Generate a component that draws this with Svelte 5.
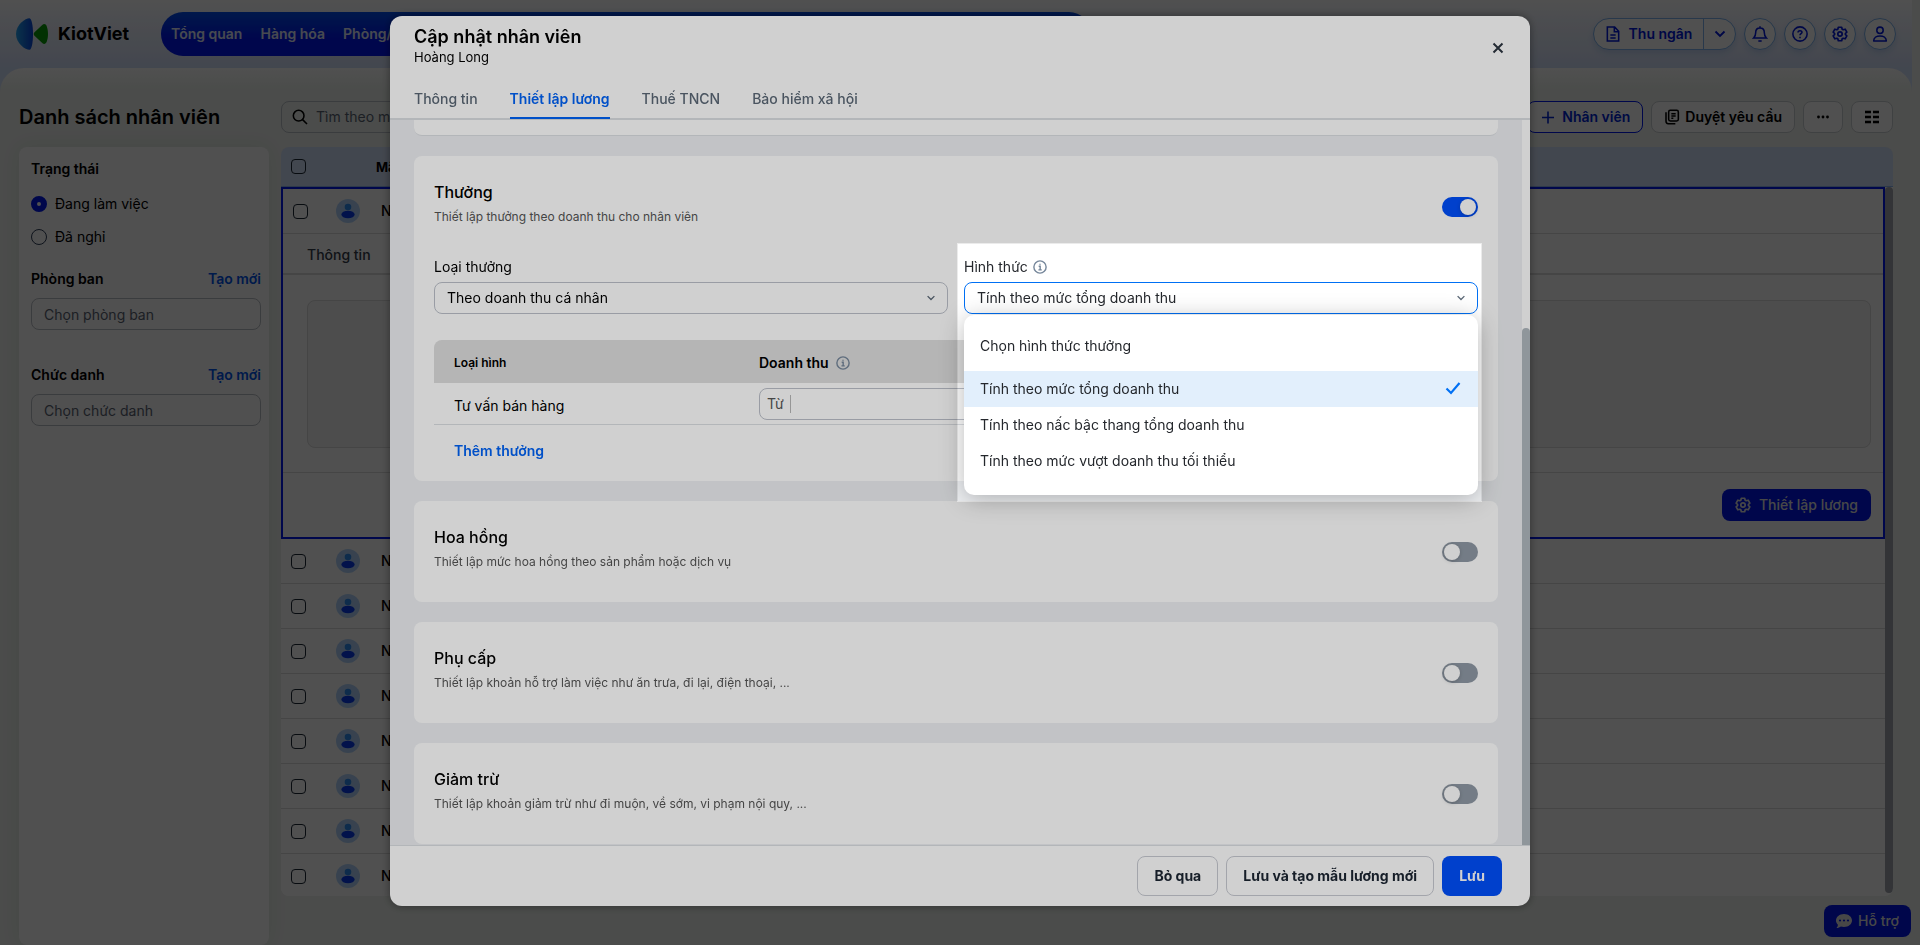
<script lang="ts">
	import { onMount } from 'svelte'

	const navItems = ['Tổng quan', 'Hàng hóa', 'Phòng/']
	const modalTabs = ['Thông tin', 'Thiết lập lương', 'Thuế TNCN', 'Bảo hiểm xã hội']
	const employees = ['NV8', 'NV7', 'NV6', 'NV5', 'NV4', 'NV3', 'NV2', 'NV1']
	const methods = [
		'Chọn hình thức thưởng',
		'Tính theo mức tổng doanh thu',
		'Tính theo nấc bậc thang tổng doanh thu',
		'Tính theo mức vượt doanh thu tối thiểu'
	]

	let status = $state('active')
	let activeTab = $state('Thiết lập lương')
	let method = $state(methods[1])
	let bonusOn = $state(true)
	let extras = $state([
		{ id: 'hoa-hong', title: 'Hoa hồng', desc: 'Thiết lập mức hoa hồng theo sản phẩm hoặc dịch vụ', on: false },
		{ id: 'phu-cap', title: 'Phụ cấp', desc: 'Thiết lập khoản hỗ trợ làm việc như ăn trưa, đi lại, điện thoại, ...', on: false },
		{ id: 'giam-tru', title: 'Giảm trừ', desc: 'Thiết lập khoản giảm trừ như đi muộn, về sớm, vi phạm nội quy, ...', on: false }
	])

	onMount(() => {
		document.documentElement.lang = 'vi'
	})
</script>

{#snippet gear()}
	<svg class="icon" viewBox="1 1.500 22 22" aria-hidden="true">
		<path stroke-linejoin="round" d="M9.700 3.200h4.600l.7 2.700 1.400.8 2.700-.8 2.300 4-2 1.900v1.400l2 1.900-2.300 4-2.700-.8-1.400.8-.7 2.700H9.700l-.7-2.700-1.400-.8-2.700.8-2.300-4 2-1.900v-1.400l-2-1.900 2.300-4 2.700.8 1.400-.8z" />
		<circle cx="12" cy="12.500" r="3" />
	</svg>
{/snippet}

{#snippet chevron()}
	<svg class="icon chevron" viewBox="0 0 16 16" aria-hidden="true"><path d="M3.500 5.500 8 10l4.500-4.500" /></svg>
{/snippet}

{#snippet info()}
	<svg class="info" viewBox="0 0 16 16" aria-hidden="true">
		<circle cx="8" cy="8" r="7" />
		<path d="M6.500 7.200H8.200V11.300M6.200 11.300H10" />
		<path d="M8 4.200v1.300" />
	</svg>
{/snippet}

{#snippet avatar()}
	<svg class="avatar" viewBox="0 0 24 24" aria-hidden="true">
		<circle cx="12" cy="12" r="12" fill="#b4d6fb" />
		<circle cx="12" cy="8" r="3.300" fill="#2f8df5" />
		<ellipse cx="12" cy="15.500" rx="6.600" ry="3.800" fill="#0a3cf0" />
	</svg>
{/snippet}

<div class="page">
	<header class="topbar">
		<a class="logo" href="#home">
			<svg viewBox="0 0 32 32" aria-hidden="true">
				<defs>
					<linearGradient id="logo-blue"><stop offset="0" stop-color="#24a4f0" /><stop offset="1" stop-color="#0b46dc" /></linearGradient>
				</defs>
				<path fill="url(#logo-blue)" d="M13.500 0.200C15.500 0.500 17 7 17 16S15.500 31.500 13.500 31.800C10 32 0 26 0 16S10 0 13.500 0.200Z" />
				<path fill="#0aa00a" d="M18.500 14.300 26.500 6.800C28 5.500 30 6 30.800 8.500 32.400 13 32.400 19 30.800 23.500 30 26 28 26.500 26.500 25.200L18.500 17.700C17.500 16.700 17.500 15.300 18.500 14.300Z" />
			</svg>
			<span>KiotViet</span>
		</a>
		<nav class="main-nav">
			{#each navItems as item}
				<a href="#nav">{item}</a>
			{/each}
		</nav>
		<div class="top-actions">
			<div class="cashier">
				<button>
					<svg class="icon" viewBox="0 0 24 24" aria-hidden="true"><path d="M3.500 1.500h11L20.500 8v14.500h-17zM14 2v6.500h6M8 13.500h8M8 18h8" /></svg>
					Thu ngân
				</button>
				<button aria-label="Mở rộng">{@render chevron()}</button>
			</div>
			<button class="round" aria-label="Thông báo">
				<svg class="icon" viewBox="0 0 24 24" aria-hidden="true"><path d="M2.500 18h19c-2-2-3-4-3-8 0-4-2.500-7-6.500-7s-6.500 3-6.500 7c0 4-1 6-3 8zM12 .5V3" /><path d="M9.500 22.500h5" /></svg>
			</button>
			<button class="round" aria-label="Trợ giúp">
				<svg class="icon" viewBox="0 0 24 24" aria-hidden="true"><circle cx="12" cy="12" r="10.700" /><path d="M9 9.800c0-3.700 6-3.700 6-.3 0 2-3 2.200-3 4.500M12 16v2.300" /></svg>
			</button>
			<button class="round" aria-label="Thiết lập">{@render gear()}</button>
			<button class="round" aria-label="Tài khoản">
				<svg class="icon" viewBox="0 0 24 24" aria-hidden="true"><circle cx="12" cy="6.500" r="4.800" /><path stroke-linejoin="round" d="M2.500 22.500c0-10 19-10 19 0z" /></svg>
			</button>
		</div>
	</header>

	<main class="content">
		<aside class="sidebar">
			<h1>Danh sách nhân viên</h1>
			<div class="filters">
				<h2>Trạng thái</h2>
				<label class="radio"><input type="radio" name="status" value="active" bind:group={status} />Đang làm việc</label>
				<label class="radio"><input type="radio" name="status" value="off" bind:group={status} />Đã nghỉ</label>
				<div class="filter">
					<div class="filter-head"><label for="department">Phòng ban</label><a href="#new-department">Tạo mới</a></div>
					<input id="department" type="text" placeholder="Chọn phòng ban" />
				</div>
				<div class="filter">
					<div class="filter-head"><label for="position">Chức danh</label><a href="#new-position">Tạo mới</a></div>
					<input id="position" type="text" placeholder="Chọn chức danh" />
				</div>
			</div>
		</aside>

		<section class="listing">
			<div class="toolbar">
				<label class="search">
					<svg class="icon" viewBox="0 0 24 24" aria-hidden="true"><circle cx="10" cy="10" r="8" /><path d="m15.500 15.500 7 7" /></svg>
					<input type="text" placeholder="Tìm theo mã" aria-label="Tìm nhân viên" />
				</label>
				<div class="toolbar-actions">
					<button class="tool primary">
						<svg class="icon thin" viewBox="0 0 16 16" aria-hidden="true"><path d="M8 2.500v12M2 8.500h12" /></svg>
						Nhân viên
					</button>
					<button class="tool">
						<svg class="icon" viewBox="0 0 24 24" aria-hidden="true"><rect x="7" y="2" width="14.500" height="16" rx="2.500" /><path d="M3 5v13.500q0 3.500 3.500 3.500H17M11 7h6.500M11 10.500h6.500M11 14h3" /></svg>
						Duyệt yêu cầu
					</button>
					<button class="tool more" aria-label="Thêm thao tác">
						<svg class="icon filled" viewBox="0 0 16 16" aria-hidden="true"><circle cx="3.500" cy="8" r="1.400" /><circle cx="8" cy="8" r="1.400" /><circle cx="12.500" cy="8" r="1.400" /></svg>
					</button>
					<button class="tool" aria-label="Tùy chỉnh cột">
						<svg class="icon" viewBox="0 0 16 16" aria-hidden="true"><path d="M1 3h6M9 3h6M1 8h6M9 8h6M1 13h6M9 13h6" /></svg>
					</button>
				</div>
			</div>

			<div class="grid">
				<div class="grid-head">
					<input type="checkbox" aria-label="Chọn tất cả" />
					<span>Mã</span>
				</div>
				<div class="grid-body">
					<div class="rows">
						<div class="expanded">
							<div class="row">
								<input type="checkbox" aria-label="Chọn NV9" />
								{@render avatar()}
								<span>NV9</span>
							</div>
							<div class="detail-tabs"><a href="#info">Thông tin</a></div>
							<div class="detail"><div class="detail-box"></div></div>
							<div class="detail-foot">
								<button class="solid">{@render gear()} Thiết lập lương</button>
							</div>
						</div>
						{#each employees as code}
							<div class="row">
								<input type="checkbox" aria-label={`Chọn ${code}`} />
								{@render avatar()}
								<span>{code}</span>
							</div>
						{/each}
					</div>
					<div class="grid-scroll"></div>
				</div>
			</div>
		</section>
	</main>

	<button class="solid support">
		<svg class="bubble" viewBox="0 0 16 16" aria-hidden="true">
			<path d="M8 1C12.500 1 16 3.900 16 7.500S12.500 14 8 14C6.900 14 5.800 13.800 4.900 13.500 3.800 14.300 2.200 15 .5 15 1.400 14.100 1.900 12.800 1.900 11.700.7 10.500 0 9.100 0 7.500 0 3.900 3.500 1 8 1Z" />
			<g fill="#0016f0"><circle cx="4" cy="7.500" r="1.100" /><circle cx="8" cy="7.500" r="1.100" /><circle cx="12" cy="7.500" r="1.100" /></g>
		</svg>
		Hỗ trợ
	</button>
</div>

<div class="backdrop">
	<div class="modal" role="dialog" aria-modal="true" aria-labelledby="modal-title">
		<div class="modal-head">
			<h2 id="modal-title">Cập nhật nhân viên</h2>
			<p>Hoàng Long</p>
			<button class="close" aria-label="Đóng">
				<svg viewBox="0 0 12 12" aria-hidden="true"><path d="m1.500 1.500 9 9M10.500 1.500l-9 9" /></svg>
			</button>
			<div class="tabs" role="tablist">
				{#each modalTabs as tab}
					<button role="tab" aria-selected={tab === activeTab} class:active={tab === activeTab} onclick={() => (activeTab = tab)}>{tab}</button>
				{/each}
			</div>
		</div>

		<div class="modal-body">
			<div class="cards">
				<div class="card-end"></div>

				<section class="card">
					<div class="card-head">
						<div>
							<h3 id="thuong">Thưởng</h3>
							<p>Thiết lập thưởng theo doanh thu cho nhân viên</p>
						</div>
						<input class="toggle" type="checkbox" aria-labelledby="thuong" bind:checked={bonusOn} />
					</div>

					<div class="fields">
						<div class="field">
							<label for="bonus-type">Loại thưởng</label>
							<div class="select">
								<select id="bonus-type"><option>Theo doanh thu cá nhân</option></select>
								{@render chevron()}
							</div>
						</div>
						<div class="field">
							<!-- Vùng sáng làm nổi bật ô hình thức -->
							<div class="spotlight"></div>
							<label for="bonus-method">Hình thức {@render info()}</label>
							<div class="select open">
								<select id="bonus-method" bind:value={method}>
									{#each methods as item}
										<option>{item}</option>
									{/each}
								</select>
								{@render chevron()}
							</div>
							<ul class="menu" role="listbox" aria-label="Hình thức">
								{#each methods as item}
									<li role="option" aria-selected={item === method} class:selected={item === method}>
										{item}
										{#if item === method}
											<svg class="check" viewBox="0 0 16 16" aria-hidden="true"><path d="m1.500 7.500 4.500 4.500L14.500 2" /></svg>
										{/if}
									</li>
								{/each}
							</ul>
						</div>
					</div>

					<table>
						<thead>
							<tr>
								<th>Loại hình</th>
								<th class="revenue">Doanh thu {@render info()}</th>
							</tr>
						</thead>
						<tbody>
							<tr>
								<td>Tư vấn bán hàng</td>
								<td>
									<label class="from">Từ <span></span><input type="text" aria-label="Doanh thu từ" /></label>
								</td>
							</tr>
						</tbody>
					</table>
					<button class="add">Thêm thưởng</button>
				</section>

				{#each extras as card}
					<section class="card">
						<div class="card-head">
							<div>
								<h3 id={card.id}>{card.title}</h3>
								<p>{card.desc}</p>
							</div>
							<input class="toggle" type="checkbox" aria-labelledby={card.id} bind:checked={card.on} />
						</div>
					</section>
				{/each}
			</div>
			<div class="scroll"><div class="thumb"></div></div>
		</div>

		<div class="modal-foot">
			<button>Bỏ qua</button>
			<button>Lưu và tạo mẫu lương mới</button>
			<button class="save">Lưu</button>
		</div>
	</div>
</div>

<style>
	:global(body) {
		margin: 0;
		overflow: hidden;
		font-family: Inter, 'Liberation Sans', sans-serif;
		font-size: 14px;
		line-height: 20px;
		color: #000;
	}

	* {
		box-sizing: border-box;
	}

	h1,
	h2,
	h3,
	p,
	ul {
		margin: 0;
		padding: 0;
	}

	a {
		color: inherit;
		text-decoration: none;
	}

	button,
	input,
	select {
		margin: 0;
		padding: 0;
		font: inherit;
		color: inherit;
		background: none;
		border: none;
		outline: none;
	}

	svg {
		display: block;
		flex: none;
	}

	.icon {
		width: 16px;
		height: 16px;
		fill: none;
		stroke: currentColor;
		stroke-width: 2.3;
	}

	.icon.thin {
		stroke-width: 1.6;
	}

	.icon.chevron {
		stroke-width: 1.8;
	}

	.icon.filled {
		fill: currentColor;
		stroke: none;
	}

	.page {
		display: flex;
		flex-direction: column;
		height: 100vh;
		padding-right: 8px;
		background:
			linear-gradient(#fff 0, #d6e2fb 68px, #d6e2fb 92px, #eff4ef 92px) content-box,
			#eff4ef;
	}

	/* Thanh trên cùng */
	.topbar {
		display: flex;
		align-items: center;
		height: 68px;
		padding: 0 16px;
	}

	.logo {
		display: flex;
		align-items: center;
		gap: 10px;
		width: 145px;
		font-size: 18px;
		font-weight: 700;
	}

	.logo svg {
		width: 32px;
		height: 32px;
	}

	.main-nav {
		display: flex;
		align-items: center;
		gap: 18px;
		width: 930px;
		height: 44px;
		padding: 0 10px;
		overflow: hidden;
		white-space: nowrap;
		font-weight: 600;
		color: #e6edff;
		background: linear-gradient(#0050f0, #0016f5 60%);
		border-radius: 22px;
	}

	.top-actions {
		display: flex;
		gap: 8px;
		margin-left: auto;
		margin-right: -8px;
		padding-right: 8px;
		color: #0018e0;
	}

	.cashier,
	.round {
		height: 32px;
		background: #fff;
		border: 1px solid #7fb4f0;
		border-radius: 16px;
		box-shadow: 0 3px 6px rgba(0, 80, 200, 0.15);
	}

	.cashier {
		display: flex;
		width: 143px;
		font-weight: 600;
	}

	.cashier button {
		display: flex;
		align-items: center;
		justify-content: center;
		gap: 8px;
		width: 31px;
	}

	.cashier button:first-child {
		flex: 1;
		border-right: 1px solid #7fb4f0;
	}

	.round {
		display: grid;
		place-items: center;
		width: 32px;
	}

	/* Danh sách */
	.content {
		display: flex;
		flex: 1;
		gap: 12px;
		padding: 24px 19px 0;
		background: linear-gradient(#fff, #eff4ef 24px);
		border-radius: 24px 24px 0 0;
	}

	.sidebar {
		display: flex;
		flex-direction: column;
		width: 250px;
		flex: none;
	}

	h1 {
		font-size: 20px;
		line-height: 32px;
		font-weight: 600;
		margin: 9px 0 14px;
	}

	.filters {
		flex: 1;
		padding: 12px 8px 0 12px;
		background: #fff;
		border-radius: 8px;
		box-shadow: 0 0 20px rgba(0, 0, 0, 0.07);
	}

	.filters h2 {
		font-size: 14px;
		font-weight: 600;
		margin-bottom: 15px;
	}

	.radio {
		display: flex;
		align-items: center;
		gap: 8px;
		height: 20px;
		margin-bottom: 13px;
	}

	.radio input {
		appearance: none;
		width: 16px;
		height: 16px;
		border: 1px solid #30405a;
		border-radius: 50%;
	}

	.radio input:checked {
		border: 6px solid #0018f0;
	}

	.filter {
		margin: 22px 0 0;
	}

	.filter + .filter {
		margin-top: 35px;
	}

	.filter-head {
		display: flex;
		justify-content: space-between;
		margin-bottom: 9px;
		font-weight: 600;
	}

	.filter-head a {
		color: #0055f0;
	}

	.filter input {
		width: 100%;
		height: 32px;
		padding: 0 12px;
		border: 1px solid #bcc0c8;
		border-radius: 8px;
	}

	::placeholder {
		color: #5c6675;
		opacity: 1;
	}

	.listing {
		flex: 1;
		min-width: 0;
	}

	.toolbar {
		display: flex;
		justify-content: space-between;
		margin: 9px 0 14px;
	}

	.search {
		display: flex;
		align-items: center;
		gap: 8px;
		width: 400px;
		height: 32px;
		padding: 0 10px;
		border: 1px solid #bcc0c8;
		border-radius: 8px;
	}

	.search input {
		flex: 1;
	}

	.toolbar-actions {
		display: flex;
		gap: 8px;
	}

	.tool {
		display: flex;
		align-items: center;
		gap: 5px;
		height: 32px;
		padding: 0 12px;
		font-weight: 600;
		background: #fff;
		border: 1px solid #ccd0d4;
		border-radius: 8px;
	}

	.tool.primary {
		gap: 6px;
		color: #0026d8;
		border-color: #0018f0;
	}

	.tool.more {
		padding: 0 11px;
	}

	.grid {
		overflow: hidden;
		border-radius: 8px;
	}

	.grid-head,
	.row {
		display: flex;
		align-items: center;
		padding-left: 10px;
		background: #fff;
	}

	.grid-head {
		height: 40px;
		font-weight: 700;
		font-size: 13px;
		background: #d6e3fb;
		border-bottom: 1px solid #8fb6ee;
	}

	.grid-head span {
		margin-left: 70px;
	}

	input[type='checkbox']:not(.toggle) {
		appearance: none;
		width: 15px;
		height: 15px;
		border: 1px solid #1c2836;
		border-radius: 4px;
	}

	.grid-body {
		display: flex;
		height: 709px;
		background: #fff;
		overflow: hidden;
	}

	.rows {
		flex: 1;
	}

	.row {
		height: 45px;
		font-weight: 500;
		border-bottom: 1px solid #dcdcdc;
	}

	.avatar {
		width: 24px;
		height: 24px;
		margin: 0 21px 0 30px;
	}

	.expanded .avatar {
		margin-left: 28px;
	}

	.grid-scroll {
		width: 8px;
		height: 706px;
		background: #a4a8b0;
		border-radius: 4px;
	}

	.expanded {
		border: 2px solid #0018f5;
	}

	.detail-tabs {
		height: 41px;
		padding: 11px 24px 8px;
		font-weight: 500;
		color: #35404c;
		border-bottom: 2px solid #dcdcdc;
	}

	.detail {
		padding: 25px 12px 24px 24px;
		border-bottom: 1px solid #dcdcdc;
	}

	.detail-box {
		height: 148px;
		background: #f7f7f7;
		border: 1px solid #dcdcdc;
		border-radius: 8px;
	}

	.detail-foot {
		display: flex;
		justify-content: flex-end;
		padding: 16px 12px;
	}

	.solid {
		display: flex;
		align-items: center;
		gap: 8px;
		height: 32px;
		padding: 0 13px;
		font-weight: 500;
		color: #e6e6e6;
		background: #0016f0;
		border-radius: 8px;
	}

	.support {
		position: fixed;
		right: 9px;
		bottom: 8px;
		gap: 6px;
		padding: 0 12px;
	}

	.bubble {
		width: 16px;
		height: 16px;
		fill: currentColor;
	}

	/* Hộp thoại */
	.backdrop {
		position: fixed;
		inset: 0;
		display: flex;
		align-items: flex-start;
		justify-content: center;
		padding: 16px;
		background: rgba(0, 0, 0, 0.615);
	}

	.modal {
		width: 100%;
		max-width: 1140px;
		background: #fff;
		border-radius: 12px;
		box-shadow: 0 0 8px rgba(0, 0, 0, 0.4);
	}

	.modal-head {
		position: relative;
		padding-top: 9px;
	}

	.modal-head h2 {
		padding-left: 24px;
		font-size: 18px;
		line-height: 24px;
		font-weight: 600;
	}

	.modal-head p {
		padding-left: 24px;
		font-size: 13px;
		line-height: 16px;
	}

	.close {
		position: absolute;
		top: 16px;
		right: 16px;
		display: grid;
		place-items: center;
		width: 32px;
		height: 32px;
	}

	.close svg {
		width: 12px;
		height: 12px;
		stroke: #2c3540;
		stroke-width: 2;
	}

	.tabs {
		display: flex;
		gap: 32px;
		height: 40px;
		margin-top: 15px;
		padding: 0 24px;
		border-bottom: 2px solid #dcdfe3;
	}

	.tabs button {
		height: 39px;
		font-weight: 500;
		color: #5b6876;
		border-bottom: 2px solid transparent;
	}

	.tabs .active {
		font-weight: 600;
		color: #0062f5;
		border-color: #0062f5;
	}

	.modal-body {
		display: flex;
		background: #eef0f3;
	}

	.cards {
		display: flex;
		flex: 1;
		flex-direction: column;
		gap: 20px;
		padding: 0 24px 1px;
	}

	.card-end {
		height: 16px;
		background: #fff;
		border-bottom: 1px solid #dcdfe3;
		border-radius: 0 0 8px 8px;
	}

	.card {
		padding: 24px 20px 0;
		background: #fff;
		border-radius: 8px;
	}

	.card-head {
		display: flex;
		justify-content: space-between;
		height: 54px;
		margin-bottom: 23px;
	}

	h3 {
		font-size: 16px;
		line-height: 24px;
		font-weight: 500;
	}

	.card-head p {
		margin-top: 4px;
		font-size: 12px;
		line-height: 18px;
		color: #555;
	}

	.toggle {
		appearance: none;
		align-self: center;
		width: 36px;
		height: 20px;
		padding: 2px;
		background: #8f99a5;
		border-radius: 10px;
	}

	.toggle::before {
		content: '';
		display: block;
		width: 16px;
		height: 16px;
		background: #fff;
		border-radius: 50%;
		box-shadow: 0 1px 4px rgba(0, 0, 0, 0.2);
	}

	.toggle:checked {
		background: #004ffa;
	}

	.toggle:checked::before {
		margin-left: auto;
	}

	.fields {
		display: grid;
		grid-template-columns: 1fr 1fr;
		gap: 16px;
		margin-bottom: 26px;
	}

	.field {
		position: relative;
	}

	.field > label {
		display: flex;
		align-items: center;
		gap: 5px;
		height: 20px;
		margin-bottom: 5px;
	}

	.field:last-child {
		color: #24272c;
	}

	.info {
		width: 14px;
		height: 14px;
		fill: none;
		stroke: #75869a;
		stroke-width: 1.6;
	}

	.select {
		position: relative;
	}

	select {
		display: block;
		appearance: none;
		width: 100%;
		height: 32px;
		padding: 0 32px 0 12px;
		border: 1px solid #bcc0ca;
		border-radius: 8px;
	}

	.open select {
		border-color: #0070f4;
	}

	.select .chevron {
		position: absolute;
		top: 10px;
		right: 11px;
		width: 12px;
		height: 12px;
		color: #5b6876;
	}

	/* Lớp tối phủ phần còn lại của trang */
	.spotlight {
		position: absolute;
		z-index: 5;
		inset: -14px -4px -188px -7px;
		box-shadow:
			inset 0 0 0 1px rgba(0, 0, 0, 0.08),
			0 0 0 9999px rgba(0, 0, 0, 0.184);
		pointer-events: none;
	}

	.menu {
		position: absolute;
		z-index: 4;
		top: 58px;
		left: 0;
		right: 0;
		padding: 13px 0 16px;
		list-style: none;
		background: #fff;
		border-radius: 10px;
		box-shadow: 0 4px 24px rgba(0, 0, 0, 0.28);
	}

	.menu li {
		display: flex;
		align-items: center;
		justify-content: space-between;
		height: 36px;
		padding: 0 17px 0 16px;
	}

	.menu li:first-child {
		margin-bottom: 7px;
	}

	.menu .selected {
		background: #e2effc;
	}

	.check {
		width: 16px;
		height: 16px;
		fill: none;
		stroke: #0070f4;
		stroke-width: 2.2;
	}

	table {
		width: 100%;
		border-spacing: 0;
		table-layout: fixed;
	}

	th {
		height: 43px;
		padding: 2px 0 0 20px;
		font-size: 12px;
		font-weight: 600;
		text-align: left;
		background: #dedede;
	}

	th:first-child {
		width: 325px;
		border-radius: 8px 0 0 0;
	}

	th:last-child {
		border-radius: 0 8px 0 0;
	}

	.revenue {
		padding: 2px 0 0;
		font-size: 14px;
	}

	.revenue .info {
		display: inline-block;
		margin-left: 4px;
		vertical-align: -2px;
	}

	td {
		height: 42px;
		padding: 0;
		border-bottom: 1px solid #dcdfe3;
	}

	td:first-child {
		padding: 4px 0 0 20px;
	}

	.from {
		display: flex;
		align-items: center;
		gap: 6px;
		width: 300px;
		height: 32px;
		padding: 0 7px;
		color: #555;
		border: 1px solid #bcc0ca;
		border-radius: 8px;
	}

	.from span {
		width: 1px;
		height: 18px;
		background: #b8b8b8;
	}

	.from input {
		flex: 1;
		min-width: 0;
	}

	.add {
		display: block;
		margin: 16px 0 0 20px;
		padding-bottom: 20px;
		font-weight: 600;
		color: #0062f5;
	}

	.scroll {
		display: flex;
		width: 8px;
		padding-top: 208px;
		background: #fff;
	}

	.thumb {
		flex: 1;
		background: #b0b8bf;
		border-radius: 4px 4px 0 0;
	}

	.modal-foot {
		display: flex;
		justify-content: flex-end;
		gap: 8px;
		padding: 10px 28px;
		border-top: 1px solid #dcdfe3;
	}

	.modal-foot button {
		height: 40px;
		padding: 0 16px;
		font-weight: 700;
		color: #1c2532;
		border: 1px solid #c8cbd2;
		border-radius: 8px;
	}

	.modal-foot .save {
		padding: 0 17px;
		color: #fff;
		background: #004ffa;
		border: none;
	}
</style>
